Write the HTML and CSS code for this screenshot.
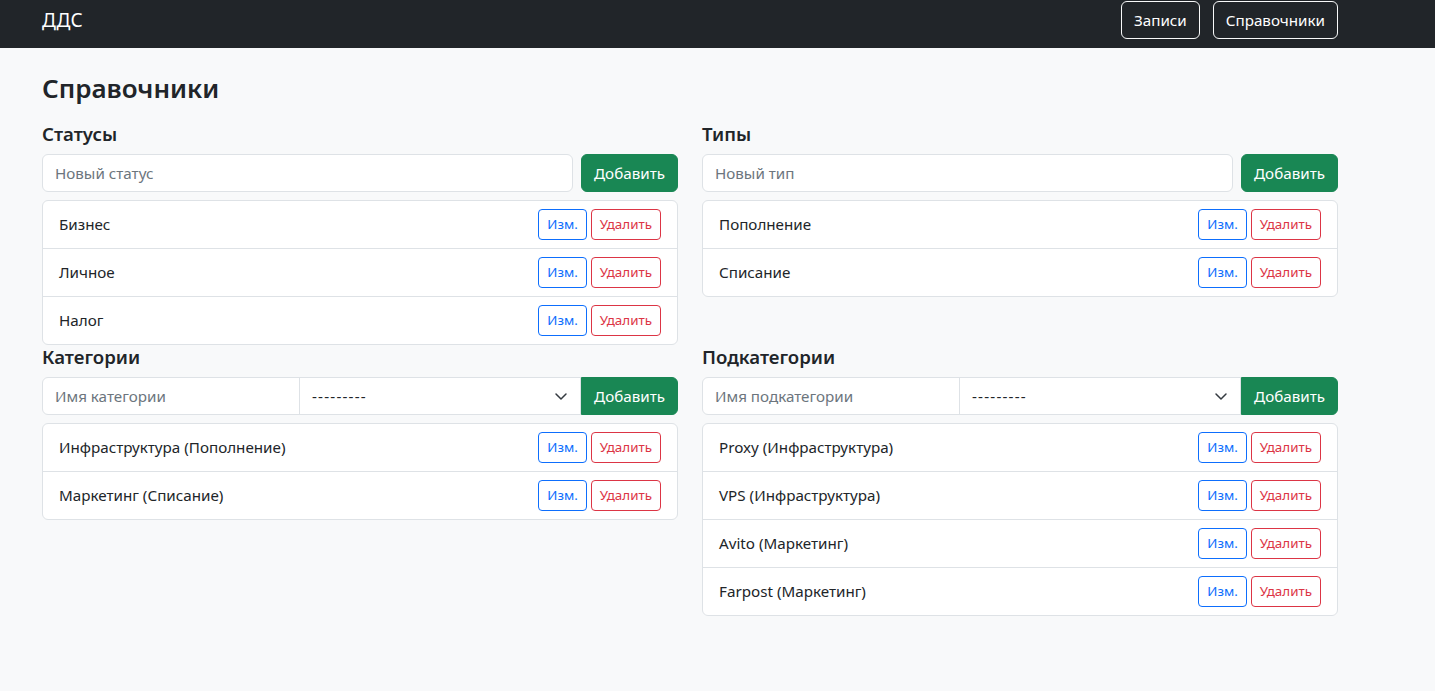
FILE: index.html
```html
<!DOCTYPE html>
<html lang="ru">
<head>
<meta charset="utf-8">
<title>Справочники</title>
<link rel="stylesheet" href="styles.css">
</head>
<body>
<nav class="navbar">
  <div class="nav-inner">
    <a class="brand" href="#">ДДС</a>
    <div class="nav-links">
      <a class="btn-nav" href="#">Записи</a>
      <a class="btn-nav" href="#">Справочники</a>
    </div>
  </div>
</nav>
<main class="page">
  <h1 class="page-title">Справочники</h1>
  <div class="grid">
    <section class="block">
      <h2 class="block-title">Статусы</h2>
      <form class="add-form">
        <input class="field" type="text" placeholder="Новый статус">
        <button class="btn-add" type="button">Добавить</button>
      </form>
      <ul class="list">
        <li class="item"><span>Бизнес</span><span class="actions"><button class="btn-edit">Изм.</button><button class="btn-del">Удалить</button></span></li>
        <li class="item"><span>Личное</span><span class="actions"><button class="btn-edit">Изм.</button><button class="btn-del">Удалить</button></span></li>
        <li class="item"><span>Налог</span><span class="actions"><button class="btn-edit">Изм.</button><button class="btn-del">Удалить</button></span></li>
      </ul>
    </section>
    <section class="block">
      <h2 class="block-title">Типы</h2>
      <form class="add-form">
        <input class="field" type="text" placeholder="Новый тип">
        <button class="btn-add" type="button">Добавить</button>
      </form>
      <ul class="list">
        <li class="item"><span>Пополнение</span><span class="actions"><button class="btn-edit">Изм.</button><button class="btn-del">Удалить</button></span></li>
        <li class="item"><span>Списание</span><span class="actions"><button class="btn-edit">Изм.</button><button class="btn-del">Удалить</button></span></li>
      </ul>
    </section>
    <section class="block">
      <h2 class="block-title">Категории</h2>
      <form class="input-group">
        <input class="group-field" type="text" placeholder="Имя категории">
        <div class="group-select">
          <span class="select-value">---------</span>
          <svg class="chevron" width="16" height="16" viewBox="0 0 16 16"><path d="M3 6l5 5 5-5" fill="none" stroke="#343a40" stroke-width="1.5" stroke-linecap="round" stroke-linejoin="round"/></svg>
        </div>
        <button class="group-btn" type="button">Добавить</button>
      </form>
      <ul class="list">
        <li class="item"><span>Инфраструктура (Пополнение)</span><span class="actions"><button class="btn-edit">Изм.</button><button class="btn-del">Удалить</button></span></li>
        <li class="item"><span>Маркетинг (Списание)</span><span class="actions"><button class="btn-edit">Изм.</button><button class="btn-del">Удалить</button></span></li>
      </ul>
    </section>
    <section class="block">
      <h2 class="block-title">Подкатегории</h2>
      <form class="input-group">
        <input class="group-field" type="text" placeholder="Имя подкатегории">
        <div class="group-select">
          <span class="select-value">---------</span>
          <svg class="chevron" width="16" height="16" viewBox="0 0 16 16"><path d="M3 6l5 5 5-5" fill="none" stroke="#343a40" stroke-width="1.5" stroke-linecap="round" stroke-linejoin="round"/></svg>
        </div>
        <button class="group-btn" type="button">Добавить</button>
      </form>
      <ul class="list">
        <li class="item"><span>Proxy (Инфраструктура)</span><span class="actions"><button class="btn-edit">Изм.</button><button class="btn-del">Удалить</button></span></li>
        <li class="item"><span>VPS (Инфраструктура)</span><span class="actions"><button class="btn-edit">Изм.</button><button class="btn-del">Удалить</button></span></li>
        <li class="item"><span>Avito (Маркетинг)</span><span class="actions"><button class="btn-edit">Изм.</button><button class="btn-del">Удалить</button></span></li>
        <li class="item"><span>Farpost (Маркетинг)</span><span class="actions"><button class="btn-edit">Изм.</button><button class="btn-del">Удалить</button></span></li>
      </ul>
    </section>
  </div>
</main>
</body>
</html>
```
FILE: styles.css
```css
* { box-sizing: border-box; }
html, body { margin: 0; }
body {
  background: #f8f9fa;
  color: #212529;
  font-family: "Noto Sans", "Open Sans", sans-serif;
  font-size: 15.2px;
  line-height: 24px;
}
button, input { font-family: inherit; }

.navbar {
  background: #212529;
  height: 48px;
  padding-bottom: 8px;
}
.nav-inner {
  max-width: 1296px;
  margin-left: 42px;
  height: 40px;
  display: flex;
  align-items: center;
  justify-content: space-between;
}
.brand {
  color: #fff;
  text-decoration: none;
  font-size: 19px;
  line-height: 30px;
}
.nav-links { display: flex; gap: 13px; }
.btn-nav {
  display: inline-block;
  color: #fff;
  text-decoration: none;
  border: 1px solid #f8f9fa;
  border-radius: 6px;
  padding: 6px 12px;
  font-size: 15.2px;
  line-height: 24px;
}

.page {
  max-width: 1296px;
  margin-left: 42px;
}
.page-title {
  font-size: 26px;
  font-weight: 600;
  line-height: 34px;
  margin: 23px 0 17px;
}
.grid {
  display: grid;
  grid-template-columns: 1fr 1fr;
  column-gap: 24px;
  align-items: start;
}
.block-title {
  font-size: 18.6px;
  font-weight: 600;
  line-height: 24px;
  margin: 0 0 8px;
}

.add-form { display: flex; gap: 8px; margin: 0 0 8px; }
.field {
  flex: 1 1 auto;
  height: 38px;
  border: 1px solid #dee2e6;
  border-radius: 6px;
  padding: 6px 12px;
  font-size: 15.2px;
  background: #fff;
  color: #212529;
}
.field::placeholder, .group-field::placeholder { color: #6c757d; }
.btn-add, .group-btn {
  height: 38px;
  border: 1px solid #198754;
  background: #198754;
  color: #fff;
  border-radius: 6px;
  padding: 6px 12px;
  font-size: 15.2px;
  line-height: 24px;
}

.input-group { display: flex; margin: 0 0 8px; }
.group-field {
  flex: 1 1 0;
  min-width: 0;
  height: 38px;
  border: 1px solid #dee2e6;
  border-radius: 6px 0 0 6px;
  padding: 6px 12px;
  font-size: 15.2px;
  background: #fff;
}
.group-select {
  flex: 1 1 0;
  position: relative;
  height: 38px;
  border: 1px solid #dee2e6;
  margin-left: -1px;
  background: #fff;
  padding: 6px 36px 6px 12px;
  line-height: 24px;
}
.select-value { letter-spacing: 1.2px; }
.chevron { position: absolute; right: 11px; top: 10px; }
.group-btn { border-radius: 0 6px 6px 0; }

.list {
  list-style: none;
  margin: 0;
  padding: 0;
  background: #fff;
  border: 1px solid #dee2e6;
  border-radius: 6px;
}
.item {
  display: flex;
  align-items: center;
  justify-content: space-between;
  padding: 8px 16px;
  border-top: 1px solid #dee2e6;
  line-height: 23px;
}
.item:first-child { border-top: 0; }
.actions { display: flex; gap: 4px; }
.btn-edit, .btn-del {
  background: transparent;
  border: 1px solid;
  border-radius: 4px;
  padding: 4px 8px;
  font-size: 13.4px;
  line-height: 21px;
}
.btn-edit { color: #0d6efd; border-color: #0d6efd; }
.btn-del { color: #dc3545; border-color: #dc3545; }
```
